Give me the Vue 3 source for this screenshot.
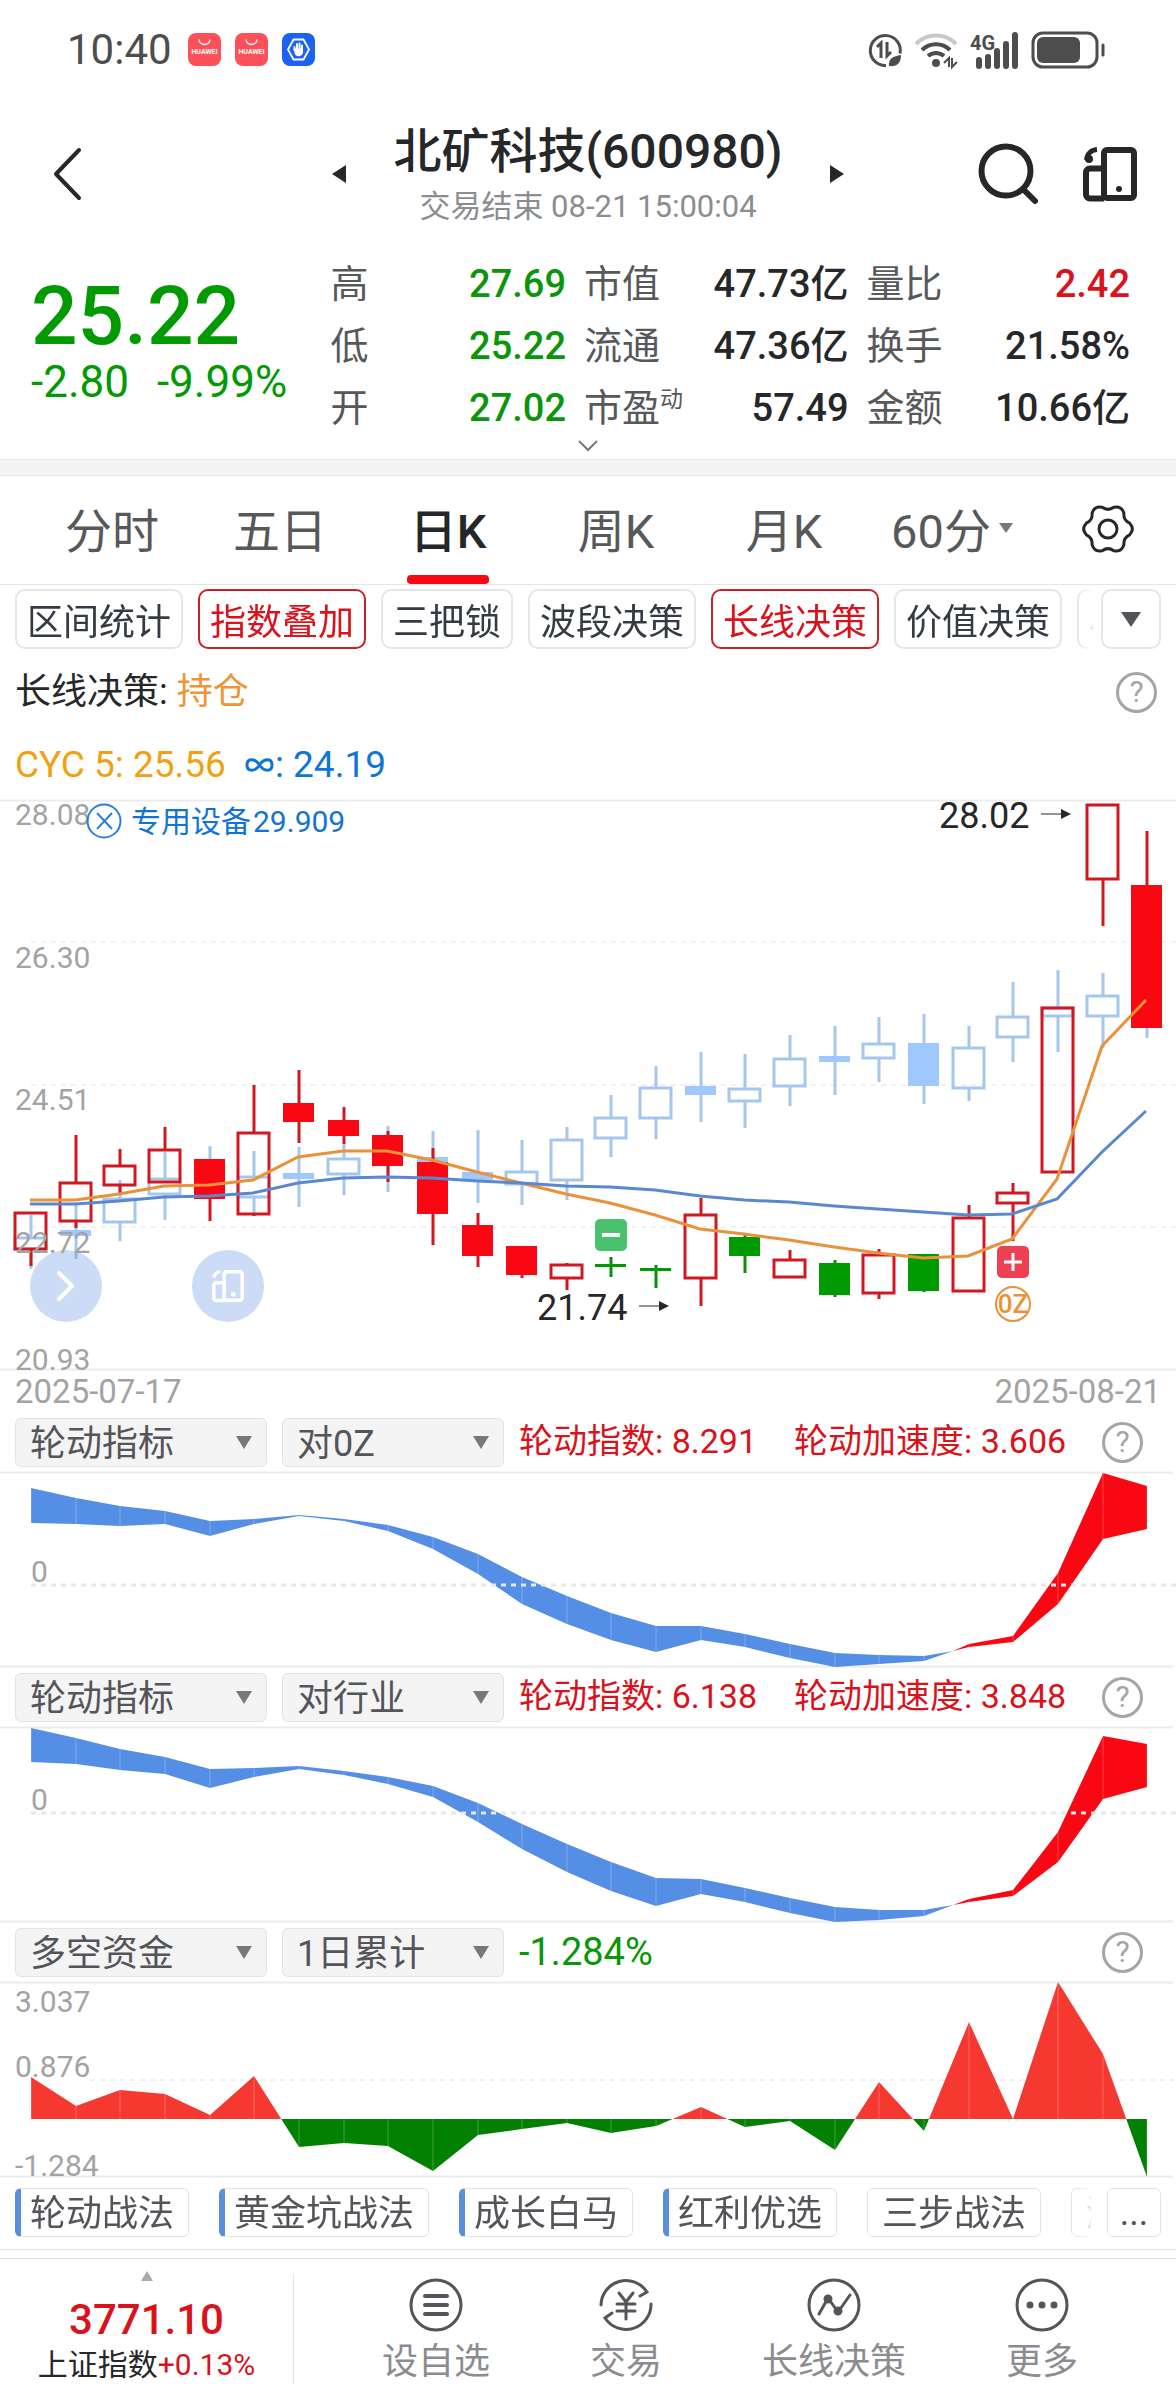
<script setup>
import { ref } from 'vue'

const quotes = [
  [
    { label: '高', value: '27.69', tone: 'down' },
    { label: '低', value: '25.22', tone: 'down' },
    { label: '开', value: '27.02', tone: 'down' },
  ],
  [
    { label: '市值', value: '47.73亿' },
    { label: '流通', value: '47.36亿' },
    { label: '市盈', sup: '动', value: '57.49' },
  ],
  [
    { label: '量比', value: '2.42', tone: 'up' },
    { label: '换手', value: '21.58%' },
    { label: '金额', value: '10.66亿' },
  ],
]

const tabs = ['分时', '五日', '日K', '周K', '月K', '60分']
const activeTab = ref('日K')

const chips = [
  { name: '区间统计' },
  { name: '指数叠加', on: true },
  { name: '三把锁' },
  { name: '波段决策' },
  { name: '长线决策', on: true },
  { name: '价值决策' },
  { name: '小' },
]

const tags = [
  { name: '轮动战法', hot: true },
  { name: '黄金坑战法', hot: true },
  { name: '成长白马', hot: true },
  { name: '红利优选', hot: true },
  { name: '三步战法' },
  { name: '涨' },
]

// Horizontal position of trading day i on every chart
const dayX = (i) => Math.round(31 + i * 44.65)

// [day, kind, body top, body bottom, high, low]; kind: h = hollow, f = filled, g = green
const stock = [
  [0, 'h', 412, 450, 412, 466], [1, 'h', 382, 422, 335, 428], [2, 'h', 365, 386, 349, 394],
  [3, 'h', 349, 383, 327, 383], [4, 'f', 359, 399, 359, 421], [5, 'h', 332, 415, 285, 416],
  [6, 'f', 303, 322, 270, 343], [7, 'f', 320, 336, 307, 344], [8, 'f', 335, 366, 331, 382],
  [9, 'f', 362, 414, 348, 445], [10, 'f', 425, 456, 413, 467], [11, 'f', 446, 475, 446, 478],
  [12, 'h', 464, 479, 463, 490], [13, 'g', 464, 467, 457, 477], [14, 'g', 468, 471, 465, 488],
  [15, 'h', 414, 479, 398, 506], [16, 'g', 437, 456, 435, 473], [17, 'h', 459, 478, 450, 478],
  [18, 'g', 463, 495, 460, 497], [19, 'h', 454, 494, 449, 499], [20, 'g', 454, 491, 454, 492],
  [21, 'h', 417, 492, 405, 492], [22, 'h', 392, 404, 383, 441], [23, 'h', 207, 373, 207, 373],
  [24, 'h', 4, 80, 4, 126], [25, 'f', 85, 228, 31, 228],
]
const sector = [
  [0, 'h', 437, 450, 415, 469], [1, 'f', 430, 436, 403, 459], [2, 'h', 398, 423, 380, 441],
  [3, 'h', 378, 395, 352, 420], [4, 'f', 365, 390, 346, 399], [5, 'h', 376, 398, 351, 413],
  [6, 'f', 373, 379, 347, 407], [7, 'h', 358, 375, 344, 395], [8, 'f', 340, 363, 326, 392],
  [9, 'f', 357, 380, 331, 400], [10, 'f', 372, 380, 330, 403], [11, 'h', 371, 385, 340, 405],
  [12, 'h', 339, 381, 327, 400], [13, 'h', 317, 339, 295, 357], [14, 'h', 287, 319, 266, 339],
  [15, 'f', 286, 295, 252, 322], [16, 'h', 288, 302, 254, 328], [17, 'h', 258, 287, 235, 306],
  [18, 'f', 256, 262, 226, 295], [19, 'h', 243, 259, 217, 282], [20, 'f', 243, 286, 214, 304],
  [21, 'h', 247, 289, 226, 301], [22, 'h', 216, 238, 182, 262], [23, 'h', 207, 217, 170, 252],
  [24, 'h', 195, 217, 173, 248], [25, 'f', 200, 220, 190, 238],
]
const candle = ([i, kind, top, bottom, high, low]) => ({
  i, kind, top, bottom, high, low, x: dayX(i),
})
const series = [
  { name: 'sector', candles: sector.map(candle) },
  { name: 'stock', candles: stock.map(candle) },
]

const cyc5 = [400, 400, 394, 386, 385, 380, 357, 351, 351, 360, 372, 383, 394, 403, 415, 429, 434, 440, 447, 453, 458, 456, 439, 379, 246, 200]
const cycAll = [404, 404, 401, 397, 396, 393, 383, 378, 377, 378, 381, 383, 386, 387, 390, 396, 400, 402, 406, 409, 412, 415, 414, 399, 352, 311]
const line = (ys) => ys.map((y, i) => `${dayX(i) - 1},${y}`).join(' ')

const axis = [
  { text: '28.08', y: 25 },
  { text: '26.30', y: 168 },
  { text: '24.51', y: 310 },
  { text: '22.72', y: 453 },
  { text: '20.93', y: 570 },
]

const rotations = [
  {
    id: 'market', kind: '轮动指标', scope: '对0Z', index: '8.291', speed: '3.606', zero: 113, cross: 179,
    upper: [16, 26, 34, 39, 49, 47, 43, 47, 53, 65, 82, 105, 124, 141, 154, 154, 162, 172, 181, 183, 184, 172, 164, 101, 1, 14],
    lower: [51, 52, 54, 52, 64, 52, 44, 49, 59, 77, 102, 132, 152, 168, 180, 168, 175, 186, 195, 192, 189, 175, 170, 132, 67, 57],
  },
  {
    id: 'industry', kind: '轮动指标', scope: '对行业', index: '6.138', speed: '3.848', zero: 86, cross: 178,
    upper: [1, 11, 22, 30, 42, 41, 39, 44, 50, 59, 76, 97, 117, 135, 151, 152, 161, 171, 180, 183, 183, 172, 163, 105, 9, 17],
    lower: [35, 37, 43, 47, 61, 50, 42, 48, 57, 70, 95, 122, 145, 164, 179, 167, 175, 186, 195, 193, 189, 175, 169, 135, 72, 60],
  },
]
const turn = 21
const crossX = 953
const points = (ys, from, to) => ys.slice(from, to).map((y, k) => `${dayX(from + k)},${y}`)
const coolBand = (r) =>
  [...points(r.upper, 0, turn), `${crossX},${r.cross}`, ...points(r.lower, 0, turn).reverse()].join(' ')
const warmBand = (r) =>
  [`${crossX},${r.cross}`, ...points(r.upper, turn), ...points(r.lower, turn).reverse()].join(' ')

const flowZero = 137
const flow = [95, 124, 108, 112, 133, 94, 165, 161, 164, 189, 153, 147, 141, 151, 144, 125, 145, 139, 168, 100, 149, 40, 137, 0, 72, 195]
const flowArea = [`31,${flowZero}`, ...flow.map((y, i) => `${dayX(i)},${y}`), `${dayX(25)},${flowZero}`].join(' ')
</script>

<template>
  <main class="page">
    <div class="status">
      <span class="clock">10:40</span>
      <svg v-for="n in 2" :key="n" class="app-icon" viewBox="0 0 33 33" aria-hidden="true">
        <rect width="33" height="33" rx="8" fill="#ff4f58" />
        <path d="M11 6.500a5.500 5 0 0 0 11 0" fill="none" stroke="#fff" stroke-width="1.300" />
        <text x="16.500" y="21" text-anchor="middle" font-size="7" font-weight="700" fill="#fff">HUAWEI</text>
      </svg>
      <svg class="app-icon" viewBox="0 0 33 33" aria-hidden="true">
        <rect width="33" height="33" rx="8" fill="#1c62f2" />
        <path d="M11.500 6.500h10l5.500 10-5.500 10h-10l-5.500-10z" fill="none" stroke="#fff" stroke-width="1.800" stroke-linejoin="round" />
        <path d="M12.500 17v-3M15 16v-5M17.500 16v-5.500M20 17v-4.500" stroke="#fff" stroke-width="2" stroke-linecap="round" />
        <path d="M11.500 15.500h9.500v3.500a4.500 4.500 0 0 1-8 2.500z" fill="#fff" />
      </svg>
      <div class="signals">
        <svg width="36" height="36" viewBox="0 0 36 36" aria-hidden="true">
          <path d="M19 33.500a15 15 0 1 1 14-12" fill="none" stroke="#4d4d4d" stroke-width="3" />
          <path d="M14 26V11l-4 4M20 10v14l4-4" fill="none" stroke="#4d4d4d" stroke-width="3" />
          <path d="M22 34c-1-7 4-10 12-11 0 8-4 12-12 11z" fill="#4d4d4d" />
        </svg>
        <svg width="44" height="36" viewBox="0 0 44 36" aria-hidden="true">
          <g fill="none" stroke-width="4">
            <path d="M2 12a28 28 0 0 1 40 0" stroke="#c9c9c9" />
            <path d="M8 18a20 20 0 0 1 28 0M14 24a12 12 0 0 1 16 0" stroke="#4d4d4d" />
          </g>
          <circle cx="22" cy="31" r="4" fill="#4d4d4d" />
          <path d="M30 31l5-5v9M38 26v9l5-5" fill="none" stroke="#4d4d4d" stroke-width="2" />
        </svg>
        <svg width="51" height="38" viewBox="0 0 51 38" aria-hidden="true">
          <text x="1" y="19" font-size="20" font-weight="700" fill="#4d4d4d">4G</text>
          <path d="M10 29v6M19 26v9M28 20v15M37 13v22M46 4v31" stroke="#4d4d4d" stroke-width="6" stroke-linecap="round" />
        </svg>
        <svg width="74" height="38" viewBox="0 0 74 38" aria-hidden="true">
          <rect x="2" y="2" width="64" height="34" rx="10" fill="none" stroke="#4d4d4d" stroke-width="3" />
          <rect x="6" y="6" width="43" height="26" rx="6" fill="#4d4d4d" />
          <path d="M72 14v10" stroke="#4d4d4d" stroke-width="3" stroke-linecap="round" />
        </svg>
      </div>
    </div>

    <header class="header">
      <button class="back" aria-label="返回">
        <svg width="28" height="52" viewBox="0 0 28 52"><path d="M26 2L3 26l23 24" fill="none" stroke="#262729" stroke-width="4" stroke-linecap="round" stroke-linejoin="round" /></svg>
      </button>
      <div class="title-area">
        <button aria-label="上一只"><svg width="14" height="18" viewBox="0 0 14 18"><path d="M14 0v18L0 9z" fill="#262729" /></svg></button>
        <div class="titles">
          <h1>北矿科技(600980)</h1>
          <p>交易结束 08-21 15:00:04</p>
        </div>
        <button aria-label="下一只"><svg width="14" height="18" viewBox="0 0 14 18"><path d="M0 0v18l14-9z" fill="#262729" /></svg></button>
      </div>
      <div class="tools">
        <button aria-label="搜索">
          <svg width="62" height="62" viewBox="0 0 62 62" fill="none" stroke="#262729" stroke-width="6">
            <circle cx="28" cy="28" r="24.500" /><path d="M45 46l12 12" stroke-linecap="round" />
          </svg>
        </button>
        <button aria-label="分屏">
          <svg width="54" height="54" viewBox="0 0 54 54" fill="none" stroke="#262729" stroke-width="6">
            <rect x="21" y="3" width="30" height="48" rx="3" />
            <path d="M21 21.500H7a4 4 0 0 0-4 4v22a4 4 0 0 0 4 4h14" />
            <path d="M14 2.500C8 3 4 7 3.500 13" stroke-width="5" />
            <circle cx="6" cy="12" r="4" fill="#262729" stroke="none" />
            <circle cx="36" cy="42" r="3" fill="#262729" stroke="none" />
          </svg>
        </button>
      </div>
    </header>

    <section class="quote">
      <div class="price">
        <strong>25.22</strong>
        <p><span>-2.80</span><span>-9.99%</span></p>
      </div>
      <dl v-for="(column, c) in quotes" :key="c">
        <div v-for="q in column" :key="q.label">
          <dt>{{ q.label }}<small v-if="q.sup">{{ q.sup }}</small></dt>
          <dd :class="q.tone">{{ q.value }}</dd>
        </div>
      </dl>
    </section>
    <button class="expand" aria-label="展开">
      <svg width="22" height="13" viewBox="0 0 22 13"><path d="M2 2l9 9 9-9" fill="none" stroke="#77787a" stroke-width="2" /></svg>
    </button>
    <div class="band"></div>

    <nav class="tabs">
      <button v-for="t in tabs" :key="t" :class="{ active: t === activeTab }" @click="activeTab = t">
        {{ t }}<svg v-if="t === '60分'" width="14" height="10" viewBox="0 0 14 10"><path d="M0 0h14L7 10z" fill="#77787a" /></svg>
      </button>
      <button class="gear" aria-label="设置">
        <svg width="52" height="52" viewBox="-26 -26 52 52" fill="none" stroke="#262729" stroke-width="3">
          <path d="M21.700-5.800Q27 0 21.700 5.800Q15.200 8.800 15.900 15.900Q13.500 23.400 5.800 21.700Q0 17.500-5.800 21.700Q-13.500 23.400-15.900 15.900Q-15.200 8.800-21.700 5.800Q-27 0-21.700-5.800Q-15.200-8.800-15.900-15.900Q-13.500-23.400-5.800-21.700Q0-17.500 5.800-21.700Q13.500-23.400 15.900-15.900Q15.200-8.800 21.700-5.800Z" />
          <circle r="9" />
        </svg>
      </button>
    </nav>

    <div class="chips">
      <div class="chip-list">
        <button v-for="c in chips" :key="c.name" :class="{ on: c.on }">{{ c.name }}</button>
      </div>
      <button class="chip-more" aria-label="更多指标"><svg width="20" height="15" viewBox="0 0 20 15"><path d="M0 0h20L10 15z" fill="#54555a" /></svg></button>
    </div>

    <div class="legend">
      <p>长线决策: <span class="hold">持仓</span></p>
      <button class="help" aria-label="说明">?</button>
    </div>
    <div class="legend cyc">
      <span class="cyc-5">CYC 5: 25.56</span>
      <span class="cyc-all"><svg width="31" height="18" viewBox="0 0 31 18" role="img" aria-label="∞"><path d="M15.500 9C11 2 3 2 3 9s8 7 12.500 0 12.500-7 12.500 0-8 7-12.500 0z" fill="none" stroke="#0f76d6" stroke-width="3" /></svg>: 24.19</span>
    </div>

    <section class="main-chart">
      <svg viewBox="0 0 1176 570" class="plot" role="img" aria-label="日K线">
        <path d="M0 .500h1176M0 569.500h1176" stroke="#ececec" stroke-width="2" />
        <path d="M31 142h1145M31 285h1145M31 427h1145" stroke="#f1f1f1" stroke-width="2" stroke-dasharray="5 5" />
        <g v-for="s in series" :key="s.name" :class="s.name">
          <g v-for="c in s.candles" :key="c.i" :class="c.kind">
            <path :d="`M${c.x} ${c.high}V${c.top}M${c.x} ${c.bottom}V${c.low}`" class="wick" />
            <rect v-if="c.kind === 'h'" :x="c.x - 16" :y="c.top + 1" width="31" :height="c.bottom - c.top - 2" class="body" />
            <rect v-else :x="c.x - 16" :y="c.top" width="31" :height="c.bottom - c.top" class="body" />
          </g>
        </g>
        <polyline :points="line(cyc5)" fill="none" stroke="#e8923a" stroke-width="3" />
        <polyline :points="line(cycAll)" fill="none" stroke="#5a88d0" stroke-width="3" />
        <g fill="#4ac16e"><rect x="595" y="419" width="32" height="32" rx="5" /><path d="M602 435h18" stroke="#fff" stroke-width="4" /></g>
        <g fill="#ee4053"><rect x="997" y="446" width="32" height="32" rx="5" /><path d="M1004 462h18M1013 453v18" stroke="#fff" stroke-width="3" /></g>
        <circle cx="1013" cy="504" r="17" fill="none" stroke="#e8923a" stroke-width="2" />
        <text x="1013" y="513" text-anchor="middle" class="mark">0Z</text>
        <g class="peak">
          <text x="939" y="28">28.02</text><text x="537" y="520">21.74</text>
          <path d="M1041 14h22M639 506h22" stroke="#262729" stroke-width="1" />
          <path d="M1061 9v10l10-5zM659 501v10l10-5z" />
        </g>
      </svg>
      <div class="float-actions">
        <button aria-label="展开工具"><svg width="20" height="32" viewBox="0 0 20 32"><path d="M3 3l13 13L3 29" fill="none" stroke="#fff" stroke-width="4" stroke-linecap="round" stroke-linejoin="round" /></svg></button>
        <button aria-label="分屏">
          <svg width="32" height="32" viewBox="0 0 54 54" fill="none" stroke="#fff" stroke-width="6">
            <rect x="20.500" y="3" width="30.500" height="48" rx="4" />
            <path d="M20.500 21.500H7a4 4 0 0 0-4 4v22a4 4 0 0 0 4 4h14" />
            <path d="M14 3C8 3 4 7 3.500 13" />
            <circle cx="36" cy="41" r="4" fill="#fff" stroke="none" />
          </svg>
        </button>
      </div>
      <svg viewBox="0 0 1176 570" class="plot axis-layer" aria-hidden="true">
        <text v-for="a in axis" :key="a.text" x="15" :y="a.y" class="axis">{{ a.text }}</text>
        <g fill="none" stroke="#2f7fd8" stroke-width="2"><circle cx="104" cy="21" r="16.500" /><path d="M97 13l15 16M112 13L97 29" /></g>
        <text x="131" y="32" class="overlay-name">专用设备</text><text x="253" y="32" class="overlay-name">29.909</text>
      </svg>
    </section>
    <div class="dates"><time>2025-07-17</time><time>2025-08-21</time></div>

    <section v-for="r in rotations" :key="r.id">
      <div class="indicator-head">
        <label class="picker wide"><select aria-label="指标"><option>{{ r.kind }}</option></select><i></i></label>
        <label class="picker"><select aria-label="对比"><option>{{ r.scope }}</option></select><i></i></label>
        <p class="up"><span>轮动指数: {{ r.index }}</span><span>轮动加速度: {{ r.speed }}</span></p>
        <button class="help" aria-label="说明">?</button>
      </div>
      <svg viewBox="0 0 1176 195" class="plot" role="img" aria-label="轮动指标">
        <path d="M0 .500h1173M0 194.500h1173" stroke="#ececec" stroke-width="2" />
        <text x="31" :y="r.zero - 3" class="axis">0</text>
        <polygon :points="coolBand(r)" fill="#558ee5" />
        <polygon :points="warmBand(r)" fill="#f90712" />
        <path v-for="(y, i) in r.upper" :key="i" :d="`M${dayX(i)} ${y}V${r.lower[i]}`" class="seam" />
        <path :d="`M31 ${r.zero}h1145`" stroke="#e8e8e8" stroke-width="3" stroke-dasharray="5 5" />
      </svg>
    </section>

    <section>
      <div class="indicator-head">
        <label class="picker wide"><select aria-label="指标"><option>多空资金</option></select><i></i></label>
        <label class="picker"><select aria-label="周期"><option>1日累计</option></select><i></i></label>
        <p class="down net"><span>-1.284%</span></p>
        <button class="help" aria-label="说明">?</button>
      </div>
      <svg viewBox="0 0 1176 195" class="plot" role="img" aria-label="多空资金">
        <clipPath id="inflow"><rect width="1176" :height="flowZero" /></clipPath>
        <clipPath id="outflow"><rect :y="flowZero" width="1176" height="58" /></clipPath>
        <path d="M0 .500h1173M0 194.500h1173" stroke="#ececec" stroke-width="2" />
        <path d="M90 98h1086" stroke="#f1f1f1" stroke-width="2" stroke-dasharray="5 5" />
        <polygon :points="flowArea" fill="#f53931" clip-path="url(#inflow)" />
        <polygon :points="flowArea" fill="#028002" clip-path="url(#outflow)" />
        <path v-for="(y, i) in flow" :key="i" :d="`M${dayX(i)} ${flowZero}V${y}`" class="seam" />
        <text x="15" y="30" class="axis">3.037</text>
        <text x="15" y="95" class="axis">0.876</text>
        <text x="15" y="194" class="axis">-1.284</text>
      </svg>
    </section>

    <div class="tags">
      <div class="tag-list">
        <button v-for="t in tags" :key="t.name" :class="{ hot: t.hot }">{{ t.name }}</button>
      </div>
      <button class="tag-more">...</button>
    </div>

    <footer class="footer">
      <a class="index" href="#index">
        <svg width="12" height="10" viewBox="0 0 12 10"><path d="M6 0l6 10H0z" fill="#aaa" /></svg>
        <strong>3771.10</strong>
        <span>上证指数<em>+0.13%</em></span>
      </a>
      <nav class="actions">
        <button>
          <svg viewBox="0 0 54 54"><circle cx="27" cy="27" r="25" /><path d="M16 18h22M16 27h22M16 36h22" stroke-width="4" /></svg>设自选
        </button>
        <button>
          <svg viewBox="0 0 54 54"><path d="M2 27a25 25 0 0 1 46-13l-7 4M52 26a25 25 0 0 1-46 14l7-5" /><path d="M20 15l7 9 7-9M27 24v17M18 26h18M18 33h18" /></svg>交易
        </button>
        <button>
          <svg viewBox="0 0 54 54"><circle cx="27" cy="27" r="25" /><path d="M12 36l9-16 10 14 12-17" /><circle cx="21" cy="21" r="3" class="dot" /><circle cx="31" cy="33" r="3" class="dot" /></svg>长线决策
        </button>
        <button>
          <svg viewBox="0 0 54 54"><circle cx="27" cy="27" r="25" /><g class="dot"><circle cx="15" cy="27" r="2" /><circle cx="27" cy="27" r="2" /><circle cx="39" cy="27" r="2" /></g></svg>更多
        </button>
      </nav>
    </footer>
  </main>
</template>

<style>
body {
  margin: 0;
  background: #fff;
}
</style>

<style scoped>
.page {
  font-family: Roboto, "Noto Sans CJK SC", sans-serif;
  color: #262729;
  overflow: hidden;
}
.page * {
  box-sizing: border-box;
}
button {
  font: inherit;
  color: inherit;
  background: none;
  border: 0;
  padding: 0;
  white-space: nowrap;
}
p, h1, dl, dd {
  margin: 0;
}
svg {
  display: block;
  flex: none;
  overflow: visible;
}
.up { color: #d8131c; }
.down { color: #0a950a; }

.status {
  display: flex;
  align-items: center;
  gap: 14px;
  height: 99px;
  padding: 0 71px 0 67px;
}
.clock {
  font-size: 42px;
  color: #4d4d4d;
  margin-right: 2px;
}
.app-icon {
  width: 33px;
  height: 33px;
}
.signals {
  display: flex;
  align-items: center;
  gap: 11px;
  margin-left: auto;
}

.header {
  display: grid;
  grid-template-columns: 1fr auto 1fr;
  align-items: center;
  height: 150px;
  padding: 0 39px;
}
.back {
  justify-self: start;
  margin-left: 14px;
}
.title-area {
  display: flex;
  align-items: center;
  gap: 47px;
}
.titles {
  text-align: center;
}
.titles h1 {
  font-size: 48px;
  font-weight: 500;
  line-height: 58px;
  white-space: nowrap;
}
.titles p {
  margin-top: 8px;
  font-size: 31px;
  line-height: 36px;
  color: #8c8d90;
}
.tools {
  display: flex;
  justify-content: flex-end;
  align-items: center;
  gap: 43px;
}

.quote {
  display: grid;
  grid-template-columns: 281fr 235fr 264fr 263fr;
  column-gap: 18px;
  padding: 4px 46px 0 31px;
}
.price {
  padding-top: 15px;
  color: #029a02;
}
.price strong {
  display: block;
  font-size: 82px;
  font-weight: 500;
  line-height: 96px;
}
.price p {
  display: flex;
  gap: 28px;
  font-size: 44px;
  line-height: 36px;
  white-space: nowrap;
}
.quote dl div {
  display: flex;
  justify-content: space-between;
  font-size: 38px;
  line-height: 62px;
  white-space: nowrap;
}
.quote dt {
  color: #57585a;
}
.quote small {
  font-size: 23px;
  line-height: 0;
  vertical-align: 14px;
}
.quote dd {
  font-weight: 500;
}
.expand {
  display: flex;
  justify-content: center;
  width: 100%;
  height: 20px;
}
.band {
  height: 17px;
  background: #f4f4f4;
  border: solid #e5e5e5;
  border-width: 1px 0;
}

.tabs {
  display: flex;
  height: 109px;
  padding: 0 28px;
  border-bottom: 1px solid #e5e5e5;
  font-size: 47px;
  color: #57585a;
}
.tabs button {
  position: relative;
  flex: 168 1 0;
  display: flex;
  align-items: center;
  justify-content: center;
  gap: 8px;
  padding-bottom: 5px;
}
.tabs .gear {
  flex-grow: 112;
  justify-content: flex-end;
  padding: 0 0 2px;
}
.gear svg {
  margin-right: 14px;
}
.tabs .active {
  color: #262729;
  font-weight: 500;
}
.tabs .active::after {
  content: "";
  position: absolute;
  left: 50%;
  bottom: 0;
  width: 82px;
  height: 9px;
  margin-left: -41px;
  border-radius: 4px;
  background: #f90712;
}

.chips {
  display: flex;
  gap: 7px;
  padding: 4px 15px 7px;
  font-size: 36px;
  color: #363a45;
}
.chip-list,
.tag-list {
  flex: 1;
  min-width: 0;
  display: flex;
  overflow: hidden;
  mask-image: linear-gradient(to left, transparent, #000 16px);
}
.chip-list {
  gap: 15px;
}
.chips button {
  flex: none;
  height: 60px;
  padding: 0 10px;
  border: 2px solid #e6e6e6;
  border-radius: 10px;
}
.chips .on {
  color: #d8131c;
  border-color: #c9202a;
}
.chips .chip-more {
  width: 60px;
  padding: 0 18px;
}

.legend {
  display: flex;
  align-items: center;
  height: 72px;
  padding: 0 19px 0 15px;
  font-size: 36px;
  line-height: 42px;
}
.hold {
  color: #ee9536;
}
.help {
  width: 41px;
  height: 41px;
  margin-left: auto;
  border: 3px solid #a5a5a5;
  border-radius: 50%;
  color: #a5a5a5;
  font-size: 30px;
  line-height: 34px;
}
.cyc {
  gap: 18px;
  padding-top: 2px;
  font-size: 37px;
}
.cyc-5 {
  color: #f0a010;
}
.cyc-all {
  display: flex;
  align-items: center;
  color: #0f76d6;
}

.main-chart {
  position: relative;
}
.plot {
  width: 100%;
  height: auto;
}
.axis-layer {
  position: absolute;
  inset: 0;
  pointer-events: none;
}
.wick {
  stroke-width: 3;
}
.body {
  stroke-width: 3;
}
.f .body,
.g .body {
  stroke: none;
}
.h .body {
  fill: none;
}
.sector .wick,
.sector .h .body {
  stroke: #a5c7ee;
}
.sector .f .body {
  fill: #9fc8fe;
}
.stock .wick,
.stock .h .body {
  stroke: #cf1822;
}
.stock .f .body {
  fill: #f90712;
}
.stock .g .wick {
  stroke: #0a8f0a;
}
.stock .g .body {
  fill: #029a02;
}
.mark {
  font-size: 26px;
  font-weight: 500;
  fill: #e8923a;
}
.peak {
  font-size: 36px;
  fill: #262729;
}
.axis {
  font-size: 30px;
  fill: #a3a3a3;
}
.overlay-name {
  font-size: 30px;
  fill: #1173d6;
}
.seam {
  stroke: #fff;
  stroke-width: 1;
  opacity: .25;
}
.float-actions {
  position: absolute;
  left: 30px;
  bottom: 48px;
  display: flex;
  gap: 90px;
}
.float-actions button {
  display: flex;
  align-items: center;
  justify-content: center;
  width: 72px;
  height: 72px;
  border-radius: 50%;
  background: rgba(91, 143, 226, .31);
}

.dates {
  display: flex;
  justify-content: space-between;
  height: 42px;
  padding: 0 15px;
  font-size: 33px;
  line-height: 44px;
  color: #a3a3a3;
}

.indicator-head {
  display: flex;
  align-items: center;
  height: 60px;
  padding: 0 33px 0 15px;
}
.picker {
  position: relative;
  width: 222px;
  margin-right: 15px;
}
.picker.wide {
  width: 252px;
}
.picker select {
  display: block;
  width: 100%;
  height: 49px;
  padding: 2px 14px 0;
  appearance: none;
  font: inherit;
  font-size: 36px;
  line-height: 46px;
  color: #54555a;
  background: #f4f4f4;
  border: 1px solid #e3e3e3;
  border-radius: 6px;
}
.picker i {
  position: absolute;
  right: 15px;
  top: 18px;
  border: 8px solid transparent;
  border-top: 13px solid #77787a;
  border-bottom: 0;
  pointer-events: none;
}
.indicator-head p {
  display: flex;
  gap: 37px;
  padding-bottom: 2px;
  font-size: 34px;
  line-height: 42px;
  white-space: nowrap;
}
.indicator-head .net {
  padding-bottom: 0;
  font-size: 38px;
}

.tags {
  display: flex;
  gap: 15px;
  height: 73px;
  padding: 11px 15px 12px;
  border-bottom: 1px solid #e0e0e0;
  font-size: 36px;
  color: #54555a;
}
.tag-list {
  gap: 30px;
}
.tags button {
  flex: none;
  padding: 2px 14px 0;
  line-height: 46px;
  border: 1px solid #e3e3e3;
  border-radius: 6px;
}
.tags .hot {
  padding-left: 9px;
  border-left: 6px solid #5b8fdc;
}
.tags .tag-more {
  width: 54px;
  padding: 0;
}

.footer {
  display: flex;
  height: 142px;
  margin-top: 8px;
  padding: 15px 0;
  border-top: 1px solid #e0e0e0;
}
.index {
  display: flex;
  flex-direction: column;
  align-items: center;
  width: 25%;
  border-right: 1px solid #e5e5e5;
  color: inherit;
  text-decoration: none;
}
.index svg {
  margin-top: -3px;
}
.index strong {
  margin-top: 15px;
  font-size: 42px;
  font-weight: 500;
  line-height: 48px;
  color: #d8131c;
}
.index span {
  font-size: 30px;
  line-height: 42px;
}
.index em {
  font-style: normal;
  color: #d8131c;
}
.actions {
  flex: 1;
  display: flex;
  justify-content: space-between;
  padding: 4px 98px 0 88px;
  font-size: 36px;
  color: #8b8c90;
}
.actions button {
  display: flex;
  flex-direction: column;
  align-items: center;
  gap: 9px;
  line-height: 42px;
}
.actions svg {
  width: 54px;
  height: 54px;
  fill: none;
  stroke: #54555a;
  stroke-width: 3;
  stroke-linecap: round;
}
.actions .dot {
  fill: #54555a;
}
</style>
